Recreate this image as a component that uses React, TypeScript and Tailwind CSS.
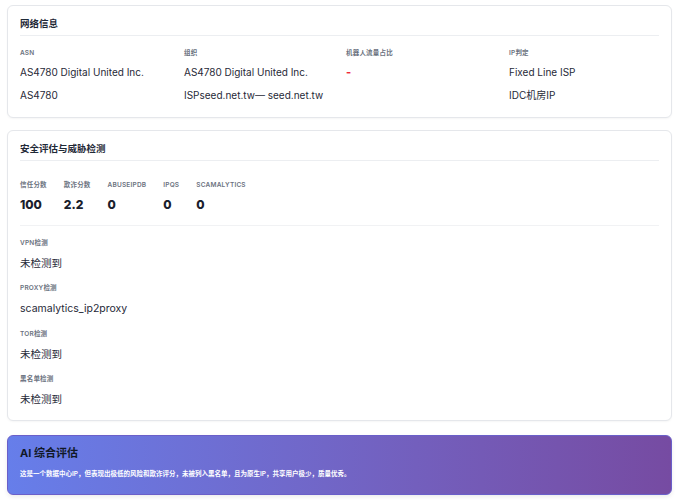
import React from 'react'

const networkCols = [
  { label: 'ASN', values: ['AS4780 Digital United Inc.', 'AS4780'] },
  { label: '组织', values: ['AS4780 Digital United Inc.', 'ISPseed.net.tw— seed.net.tw'] },
  { label: '机器人流量占比', values: ['-'], red: true },
  { label: 'IP判定', values: ['Fixed Line ISP', 'IDC机房IP'] },
]

const scores = [
  { label: '信任分数', value: '100' },
  { label: '欺诈分数', value: '2.2' },
  { label: 'ABUSEIPDB', value: '0' },
  { label: 'IPQS', value: '0' },
  { label: 'SCAMALYTICS', value: '0' },
]

const detections = [
  { label: 'VPN检测', value: '未检测到' },
  { label: 'PROXY检测', value: 'scamalytics_ip2proxy' },
  { label: 'TOR检测', value: '未检测到' },
  { label: '黑名单检测', value: '未检测到' },
]

function Label({ children }: { children: React.ReactNode }) {
  return (
    <div className="text-[6.5px] leading-[9px] font-semibold uppercase tracking-[0.03em] text-[#6b7280]">
      {children}
    </div>
  )
}

function CardTitle({ children }: { children: React.ReactNode }) {
  return (
    <h2 className="text-[9.5px] leading-[10px] font-bold text-[#1f2937] pb-[6px] border-b border-[#eceef1]">
      {children}
    </h2>
  )
}

export default function App() {
  return (
    <div className="min-h-[500px] bg-white pl-[7px] pr-[12px] pt-[5px] font-['Inter','Noto_Sans_CJK_SC',sans-serif]">
      {/* Network info */}
      <div className="rounded-[6px] border border-[#e5e7eb] bg-white px-3 pt-[13px] pb-[15.5px] shadow-[0_1px_2px_rgba(0,0,0,0.04)]">
        <CardTitle>网络信息</CardTitle>
        <div className="grid grid-cols-[164px_162px_163px_1fr] mt-[13px]">
          {networkCols.map((col) => (
            <div key={col.label}>
              <Label>{col.label}</Label>
              <div className="mt-[6.5px] flex flex-col gap-[9px]">
                {col.values.map((v, i) => (
                  <div
                    key={i}
                    className={
                      col.red
                        ? 'text-[11px] leading-[14px] text-[#ef2b3c] font-extrabold'
                        : 'text-[10px] leading-[14px] text-[#1f2937]'
                    }
                  >
                    {v}
                  </div>
                ))}
              </div>
            </div>
          ))}
        </div>
      </div>

      {/* Security */}
      <div className="mt-3 rounded-[6px] border border-[#e5e7eb] bg-white px-3 pt-[13px] pb-[12px] shadow-[0_1px_2px_rgba(0,0,0,0.04)]">
        <CardTitle>安全评估与威胁检测</CardTitle>
        <div className="flex gap-[17px] mt-5 pb-3 border-b border-[#f1f2f4]">
          {scores.map((s) => (
            <div key={s.label}>
              <Label>{s.label}</Label>
              <div className="mt-[6.5px] text-[12px] leading-[16px] font-extrabold text-[#1a202c]">{s.value}</div>
            </div>
          ))}
        </div>
        <div className="mt-[13px] flex flex-col gap-[12.5px]">
          {detections.map((d) => (
            <div key={d.label}>
              <Label>{d.label}</Label>
              <div className="mt-2 text-[10.5px] leading-[16px] text-[#1f2937]">{d.value}</div>
            </div>
          ))}
        </div>
      </div>

      {/* AI summary */}
      <div className="mt-[14px] rounded-[6px] border border-[#6a5fc9] bg-gradient-to-r from-[#667eea] to-[#764ba2] px-3 pt-[10px] pb-[15px] shadow-[0_2px_4px_rgba(0,0,0,0.08)]">
        <div className="text-[11px] leading-[14px] font-bold text-[#111827]">AI 综合评估</div>
        <div className="mt-[9px] text-[6.5px] leading-[10px] font-semibold text-white">
          这是一个数据中心IP，但表现出极低的风险和欺诈评分，未被列入黑名单，且为原生IP，共享用户极少，质量优秀。
        </div>
      </div>
    </div>
  )
}
